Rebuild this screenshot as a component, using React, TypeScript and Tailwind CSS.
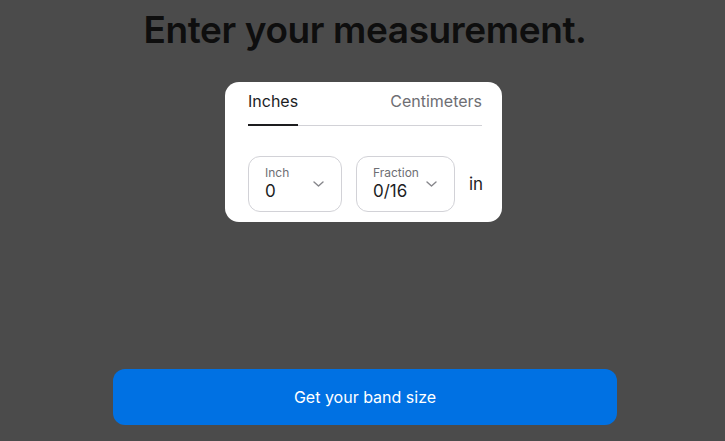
import React from "react";

function Chevron() {
  return (
    <svg width="11" height="6" viewBox="0 0 11 6" fill="none" className="shrink-0">
      <path d="M1 1l4.5 4L10 1" stroke="#86868b" strokeWidth="1.4" strokeLinecap="round" strokeLinejoin="round" />
    </svg>
  );
}

function SelectBox({ label, value, width }: { label: string; value: string; width: string }) {
  return (
    <div className={`${width} shrink-0 h-[56px] rounded-[12px] border border-[#d2d2d7] bg-white flex items-center justify-between pl-[16px] pr-[17px]`}>
      <div className="flex flex-col">
        <span className="text-[12px] leading-[14px] text-[#6e6e73]">{label}</span>
        <span className="text-[17px] leading-[22px] text-[#1d1d1f]">{value}</span>
      </div>
      <Chevron />
    </div>
  );
}

export default function App() {
  return (
    <div
      className="w-full h-[441px] bg-[#4b4b4b] flex flex-col items-center overflow-hidden"
      style={{ fontFamily: "Inter, 'Noto Sans', sans-serif" }}
    >
      <h1 className="pt-[10px] ml-[5px] text-[37px] leading-[40px] font-semibold tracking-[-0.4px] text-[#0e0e0e]">
        Enter your measurement.
      </h1>
      <div className="mt-[32px] ml-[2px] w-[277px] bg-white rounded-[14px] pt-[7px] pb-[10px] pl-[23px] pr-[20px]">
        <div className="flex justify-between border-b border-[#d2d2d7]">
          <div className="text-[16px] leading-[24px] pb-[11px] text-[#1d1d1f] border-b-2 border-[#1d1d1f] -mb-px">
            Inches
          </div>
          <div className="text-[16px] leading-[24px] pb-[11px] text-[#6e6e73]">Centimeters</div>
        </div>
        <div className="mt-[30px] flex items-center">
          <SelectBox label="Inch" value="0" width="w-[94px]" />
          <div className="w-[14px] shrink-0" />
          <SelectBox label="Fraction" value="0/16" width="w-[99px]" />
          <span className="ml-[14px] text-[17px] leading-[22px] text-[#1d1d1f]">in</span>
        </div>
      </div>
      <button className="mt-[147px] w-[504px] h-[56px] rounded-[12px] bg-[#0071e3] text-white text-[16px] leading-[22px] ml-[5px]">
        Get your band size
      </button>
    </div>
  );
}
